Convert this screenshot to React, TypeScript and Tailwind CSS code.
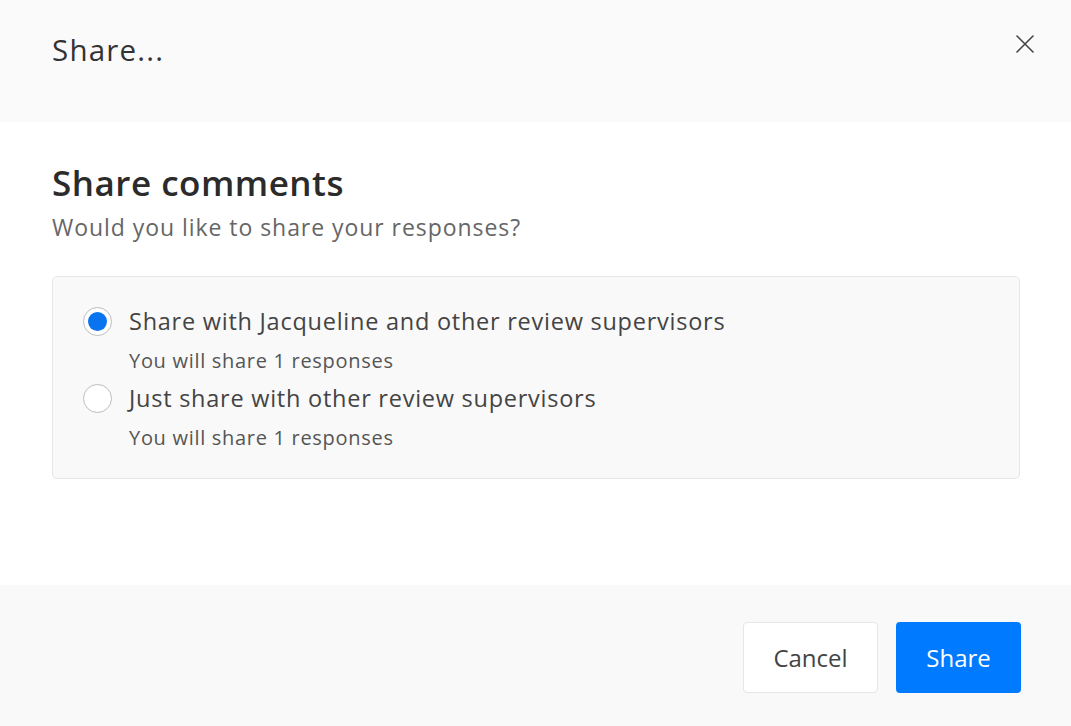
import { useState } from 'react'

const options = [
  { id: 'all', label: 'Share with Jacqueline and other review supervisors', hint: 'You will share 1 responses' },
  { id: 'supervisors', label: 'Just share with other review supervisors', hint: 'You will share 1 responses' },
]

export default function App() {
  const [choice, setChoice] = useState('all')

  return (
    <div className="flex h-[726px] w-full flex-col bg-white font-['Open_Sans',sans-serif] text-[#333]">
      {/* header */}
      <div className="flex h-[122px] shrink-0 items-start justify-between bg-[#fafafa] pl-[52px] pr-[36px] pt-[28px]">
        <h2 className="text-[29.5px] leading-[44px] tracking-[1.2px] text-[#333]">Share...</h2>
        <button className="mt-[6px] text-[#444]" aria-label="Close">
          <svg width="20" height="20" viewBox="0 0 20 20" fill="none" stroke="currentColor" strokeWidth="1.6" strokeLinecap="round">
            <path d="M2 2L18 18M18 2L2 18" />
          </svg>
        </button>
      </div>

      {/* body */}
      <div className="flex-1 px-[52px] pt-[39px]">
        <h3 className="text-[35px] font-semibold leading-[44px] tracking-[0.5px] text-[#2b2b2b]">Share comments</h3>
        <p className="mt-[4px] text-[23px] leading-[36px] tracking-[0.95px] text-[#666]">
          Would you like to share your responses?
        </p>

        <div className="mt-[31px] w-[968px] rounded-[5px] border border-[#e6e6e6] bg-[#f9f9f9] pb-[21px] pl-[30px] pt-[26px]">
          {options.map((o) => (
            <label key={o.id} className="flex cursor-pointer items-start gap-[17px]">
              <span className="mt-[4px] flex h-[29px] w-[29px] shrink-0 items-center justify-center rounded-full border border-[#bdbdbd] bg-white">
                {choice === o.id && <span className="h-[19px] w-[19px] rounded-full bg-[#0a74f0]" />}
              </span>
              <input
                type="radio"
                name="share"
                className="hidden"
                checked={choice === o.id}
                onChange={() => setChoice(o.id)}
              />
              <span className="flex flex-col">
                <span className="text-[23.5px] leading-[36px] tracking-[0.75px] text-[#444]">{o.label}</span>
                <span className="mt-[3px] text-[20px] leading-[38px] tracking-[0.7px] text-[#555]">{o.hint}</span>
              </span>
            </label>
          ))}
        </div>
      </div>

      {/* footer */}
      <div className="flex h-[141px] shrink-0 items-start justify-end gap-[18px] bg-[#f9f9f9] pr-[50px] pt-[37px]">
        <button className="h-[71px] w-[135px] rounded-[4px] border border-[#e6e6e6] bg-white text-[24px] text-[#444]">
          Cancel
        </button>
        <button className="h-[71px] w-[125px] rounded-[4px] bg-[#007bff] text-[24px] text-white">Share</button>
      </div>
    </div>
  )
}
